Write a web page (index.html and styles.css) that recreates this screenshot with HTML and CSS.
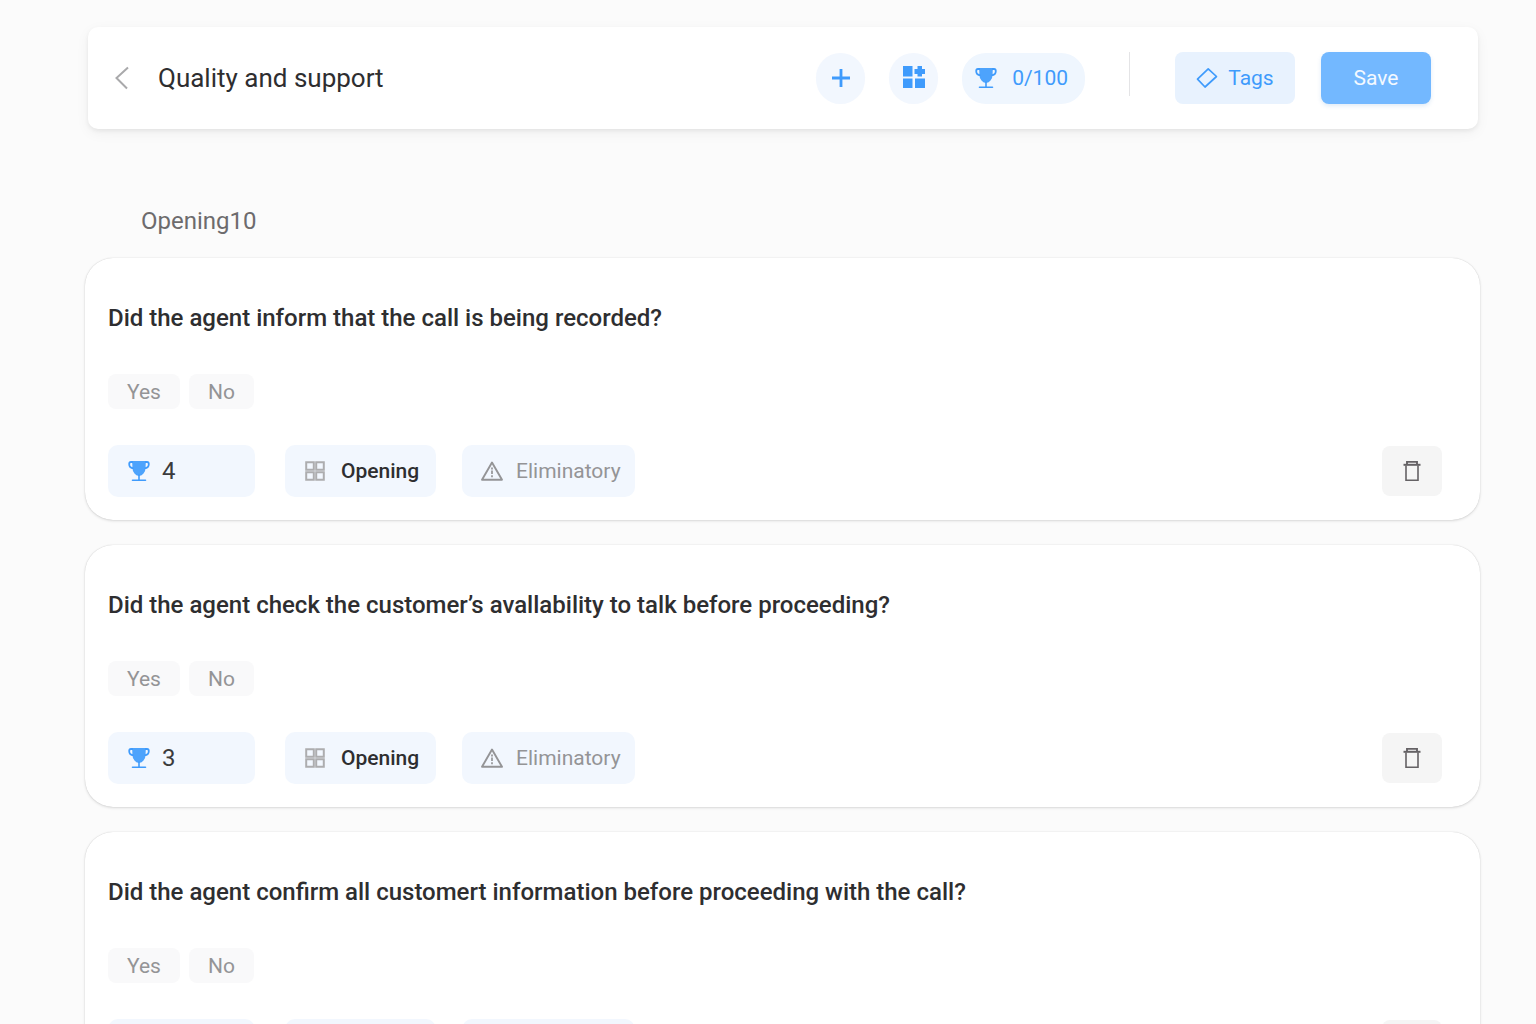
FILE: index.html
```html
<!DOCTYPE html>
<html lang="en">
<head>
  <meta charset="UTF-8">
  <meta name="viewport" content="width=device-width, initial-scale=1.0">
  <title>Quality and support</title>
  <link rel="stylesheet" href="styles.css">
</head>
<body>
  <!-- Shared icons -->
  <svg class="sprite" aria-hidden="true">
    <symbol id="icon-trophy" viewBox="0 0 22 22">
      <path d="M5 2H3Q1.200 2 1.200 4Q1.200 8 5.500 8.300M17 2H19Q20.800 2 20.800 4Q20.800 8 16.500 8.300" fill="none" stroke="currentColor" stroke-width="1.800"/>
      <path d="M4 1.100H18Q17.600 4 17.600 7.500Q17.600 11 15.500 13.500Q14 15.800 11 16Q8 15.800 6.500 13.500Q4.400 11 4.400 7.500Q4.400 4 4 1.100Z" fill="currentColor" fill-opacity="0.92"/>
      <path d="M11 15V20M4.500 20.300H17.500" fill="none" stroke="currentColor" stroke-width="1.600" stroke-linecap="round"/>
    </symbol>
    <symbol id="icon-grid" viewBox="0 0 20 20">
      <path d="M1.200 1.200H8.800V8.800H1.200ZM11.200 1.200H18.800V8.800H11.200ZM1.200 11.200H8.800V18.800H1.200ZM11.200 11.200H18.800V18.800H11.200Z" fill="none" stroke="currentColor" stroke-width="2"/>
    </symbol>
    <symbol id="icon-warning" viewBox="0 0 24 22">
      <path d="M12 2.500L22 19.800H2Z" fill="none" stroke="currentColor" stroke-width="1.900" stroke-linejoin="round"/>
      <path d="M12 7.500V9.500M12 10.500V14M12 15.300V17.300" stroke="currentColor" stroke-width="1.700"/>
    </symbol>
    <symbol id="icon-trash" viewBox="0 0 18 22">
      <path d="M3 5.500V20.200H15V5.500" fill="none" stroke="currentColor" stroke-width="1.600"/>
      <path d="M.5 4.800H17.500" stroke="currentColor" stroke-width="2"/>
      <path d="M4 4V1.900H14V4" fill="none" stroke="currentColor" stroke-width="1.900"/>
    </symbol>
  </svg>

  <header class="toolbar">
    <button type="button" class="back" aria-label="Back">
      <svg width="16" height="24" viewBox="0 0 16 24"><path d="M14 1.500L2.500 12L13 22.500" fill="none" stroke="currentColor" stroke-width="2"/></svg>
    </button>
    <h1>Quality and support</h1>
    <div class="tools">
      <button type="button" class="round-btn" aria-label="Add question">
        <svg width="20" height="20" viewBox="0 0 20 20"><path d="M10 1V19M1 10H19" stroke="currentColor" stroke-width="2.800"/></svg>
      </button>
      <button type="button" class="round-btn" aria-label="Add group">
        <svg width="24" height="24" viewBox="0 0 24 24"><path d="M1 0H10.500V10.500H1ZM1 12.500H10.500V22H1ZM13 12.500H23V22H13ZM15.500 0H20V3H23V8H20V10.500H15.500V8H12.500V3H15.500Z" fill="currentColor"/></svg>
      </button>
      <div class="total">
        <svg class="icon-trophy"><use href="#icon-trophy"/></svg>
        <span>0/100</span>
      </div>
    </div>
    <div class="actions">
      <button type="button" class="tags-btn">
        <svg width="22" height="22" viewBox="0 0 22 22"><path d="M12.200 1.800L20.500 9.500L9 20L1.500 12.200Z" fill="none" stroke="currentColor" stroke-width="1.700" stroke-linejoin="round"/></svg>
        Tags
      </button>
      <button type="button" class="save-btn">Save</button>
    </div>
  </header>

  <main>
    <h2>Opening10</h2>

    <section class="card">
      <h3>Did the agent inform that the call is being recorded?</h3>
      <div class="answers">
        <button type="button" class="answer">Yes</button>
        <button type="button" class="answer">No</button>
      </div>
      <div class="card-footer">
        <label class="chip score">
          <svg class="icon-trophy" role="img" aria-label="Score"><use href="#icon-trophy"/></svg>
          <input type="text" inputmode="numeric" value="4">
        </label>
        <button type="button" class="chip group"><svg class="icon-grid"><use href="#icon-grid"/></svg>Opening</button>
        <button type="button" class="chip eliminatory"><svg class="icon-warning"><use href="#icon-warning"/></svg>Eliminatory</button>
        <button type="button" class="delete" aria-label="Delete question"><svg class="icon-trash"><use href="#icon-trash"/></svg></button>
      </div>
    </section>

    <section class="card">
      <h3>Did the agent check the customer’s avallability to talk before proceeding?</h3>
      <div class="answers">
        <button type="button" class="answer">Yes</button>
        <button type="button" class="answer">No</button>
      </div>
      <div class="card-footer">
        <label class="chip score">
          <svg class="icon-trophy" role="img" aria-label="Score"><use href="#icon-trophy"/></svg>
          <input type="text" inputmode="numeric" value="3">
        </label>
        <button type="button" class="chip group"><svg class="icon-grid"><use href="#icon-grid"/></svg>Opening</button>
        <button type="button" class="chip eliminatory"><svg class="icon-warning"><use href="#icon-warning"/></svg>Eliminatory</button>
        <button type="button" class="delete" aria-label="Delete question"><svg class="icon-trash"><use href="#icon-trash"/></svg></button>
      </div>
    </section>

    <section class="card">
      <h3>Did the agent confirm all customert information before proceeding with the call?</h3>
      <div class="answers">
        <button type="button" class="answer">Yes</button>
        <button type="button" class="answer">No</button>
      </div>
      <div class="card-footer">
        <label class="chip score">
          <svg class="icon-trophy" role="img" aria-label="Score"><use href="#icon-trophy"/></svg>
          <input type="text" inputmode="numeric">
        </label>
        <button type="button" class="chip group"><svg class="icon-grid"><use href="#icon-grid"/></svg>Opening</button>
        <button type="button" class="chip eliminatory"><svg class="icon-warning"><use href="#icon-warning"/></svg>Eliminatory</button>
        <button type="button" class="delete" aria-label="Delete question"><svg class="icon-trash"><use href="#icon-trash"/></svg></button>
      </div>
    </section>
  </main>
</body>
</html>
```
FILE: styles.css
```css
:root {
  --primary-color: #3f9bfc;
  --primary-light: #f2f7fe;
  --save-color: #73b8ff;
  --text-color: #2e2e30;
  --muted-color: #949496;
  --background-color: #fbfbfb;
  --font-family: Roboto, Arial, sans-serif;
}
* {
  box-sizing: border-box;
}
body {
  margin: 0;
  padding: 27px 56px 24px 85px;
  background-color: var(--background-color);
  font-family: var(--font-family);
  color: var(--text-color);
}
h1, h2, h3 {
  margin: 0;
  font-weight: 400;
}
button {
  display: flex;
  align-items: center;
  justify-content: center;
  padding: 0;
  border: none;
  font-family: inherit;
  font-size: 21px;
  cursor: pointer;
}
.sprite {
  display: none;
}

/* Toolbar */
.toolbar {
  display: flex;
  align-items: center;
  height: 102px;
  margin: 0 2px 0 3px;
  padding: 0 47px 0 26px;
  background-color: #fff;
  border-radius: 10px;
  box-shadow: 0 2px 4px rgba(0, 0, 0, 0.06), 0 4px 14px rgba(0, 0, 0, 0.05);
}
.toolbar h1 {
  margin-left: 28px;
  font-size: 26px;
  line-height: 32px;
}
.back {
  background: none;
  color: #a9a9ab;
}
.tools {
  display: flex;
  gap: 24px;
  margin-left: auto;
  padding-right: 44px;
}
.round-btn {
  width: 49px;
  height: 51px;
  border-radius: 25px;
  background-color: var(--primary-light);
  color: var(--primary-color);
}
.total {
  display: flex;
  align-items: center;
  gap: 15px;
  height: 51px;
  padding: 0 17px 0 13px;
  border-radius: 24px;
  background-color: #eff6fe;
  color: var(--primary-color);
  font-size: 21px;
}
.actions {
  display: flex;
  align-items: center;
  gap: 26px;
}
.actions::before {
  content: "";
  align-self: flex-start;
  width: 1px;
  height: 44px;
  margin-right: 19px;
  background-color: #e4e4e6;
}
.tags-btn {
  gap: 10px;
  width: 120px;
  height: 52px;
  border-radius: 8px;
  background-color: #e8f2fe;
  color: var(--primary-color);
}
.save-btn {
  width: 110px;
  height: 52px;
  border-radius: 8px;
  background-color: var(--save-color);
  color: #f4f9ff;
  box-shadow: 0 2px 4px rgba(60, 130, 200, 0.16);
}

/* Questions */
h2 {
  margin: 77px 0 22px 56px;
  color: #6d6b6d;
  font-size: 24px;
  line-height: 30px;
}
.card {
  margin-bottom: 25px;
  padding: 45px 38px 23px 23px;
  background-color: #fff;
  border-radius: 28px;
  box-shadow: 0 0 1px rgba(0, 0, 0, 0.2), 0 1px 3px rgba(0, 0, 0, 0.13);
}
.card h3 {
  font-size: 24px;
  font-weight: 500;
  line-height: 30px;
}
.answers {
  display: flex;
  gap: 9px;
  margin: 41px 0 36px;
}
.answer {
  height: 35px;
  padding: 0 19px;
  border-radius: 8px;
  background-color: #f9f9fa;
  color: var(--muted-color);
}
.card-footer {
  display: flex;
  align-items: center;
}
.chip {
  display: flex;
  align-items: center;
  height: 52px;
  border-radius: 10px;
  background-color: var(--primary-light);
}
.score {
  gap: 12px;
  width: 147px;
  margin-right: 30px;
  padding: 0 20px;
}
.score input {
  width: 100%;
  min-width: 0;
  padding: 0;
  border: none;
  outline: none;
  background: none;
  color: #3b3b3d;
  font-family: inherit;
  font-size: 24px;
}
.group {
  justify-content: flex-start;
  gap: 16px;
  width: 151px;
  margin-right: 26px;
  padding-left: 20px;
  color: var(--text-color);
  font-weight: 500;
}
.eliminatory {
  justify-content: flex-start;
  gap: 12px;
  width: 173px;
  padding-left: 18px;
  color: var(--muted-color);
}
.delete {
  width: 60px;
  height: 50px;
  margin-left: auto;
  border-radius: 8px;
  background-color: #f5f5f5;
  color: #656265;
}

/* Icons */
.icon-trophy {
  flex: none;
  width: 22px;
  height: 22px;
  color: var(--primary-color);
}
.icon-grid {
  width: 20px;
  height: 20px;
  color: #adadaf;
}
.icon-warning {
  width: 24px;
  height: 22px;
}
.icon-trash {
  width: 18px;
  height: 22px;
}
```
